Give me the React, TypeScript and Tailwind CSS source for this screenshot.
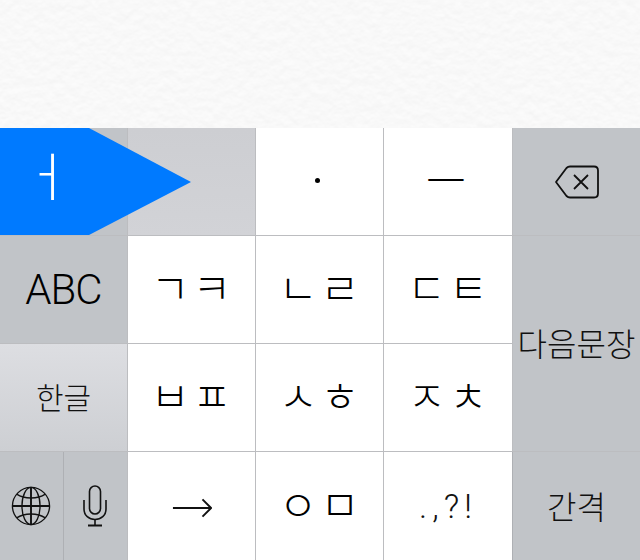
const cjk = "font-['Noto_Sans_CJK_KR','Noto_Sans',sans-serif]";

function Jamo({ a, b }: { a: string; b: string }) {
  return (
    <div className={`flex gap-[3px] pb-[7px] pr-[1px] text-[42px] leading-none font-light text-black ${cjk}`}>
      <span>{a}</span>
      <span>{b}</span>
    </div>
  );
}

function Key({ children, className = "" }: { children?: React.ReactNode; className?: string }) {
  return (
    <div className={`flex items-center justify-center border-b border-[#bcbdc0] ${className}`}>
      {children}
    </div>
  );
}

function PaperTexture() {
  return (
    <svg className="block" width="640" height="128">
      <filter id="paper" x="0" y="0" width="100%" height="100%">
        <feTurbulence type="fractalNoise" baseFrequency="0.11" numOctaves="3" seed="4" />
        <feDiffuseLighting surfaceScale="0.35" diffuseConstant="1.07" lightingColor="#f8f8f8">
          <feDistantLight azimuth="90" elevation="70" />
        </feDiffuseLighting>
      </filter>
      <rect width="640" height="128" fill="#f7f7f7" />
      <rect width="640" height="128" filter="url(#paper)" />
    </svg>
  );
}

function GlobeIcon() {
  return (
    <svg width="40" height="40" viewBox="0 0 42 42" fill="none" stroke="#111" strokeWidth="1.4">
      <circle cx="21" cy="21" r="19.5" />
      <ellipse cx="21" cy="21" rx="9.5" ry="19.5" />
      <path d="M21 1.5v39M1.5 21h39" strokeWidth="2" />
      <path d="M6 8.5c8 5.5 22 5.5 30 0M6 33.5c8-5.5 22-5.5 30 0" />
    </svg>
  );
}

function MicIcon() {
  return (
    <svg width="24" height="42" viewBox="0 0 24 42" fill="none" stroke="#111" strokeWidth="1.6">
      <rect x="6.500" y="1" width="11" height="28" rx="5.500" />
      <path d="M1 15v9c0 6.500 5 10.500 11 10.500s11-4 11-10.500v-9" />
      <path d="M12 34.500V40" />
      <path d="M5 40.500h14" strokeWidth="2" />
    </svg>
  );
}

function BackspaceIcon() {
  return (
    <svg width="46" height="34" viewBox="0 0 46 34" fill="none" stroke="#111" strokeWidth="1.800" strokeLinejoin="round">
      <path d="M16 1.500h24c2.500 0 4 1.500 4 4v23c0 2.500-1.500 4-4 4H16c-1.500 0-2.500-.5-3.500-1.500L2 17 12.500 3c1-1 2-1.500 3.500-1.500z" />
      <path d="M20 10l14 14M34 10L20 24" />
    </svg>
  );
}

function ArrowIcon() {
  return (
    <svg className="mt-[3px]" width="40" height="24" viewBox="0 0 42 24" fill="none" stroke="#111" strokeWidth="2">
      <path d="M1 12h39M32 3l9 9-9 9" />
    </svg>
  );
}

export default function App() {
  return (
    <div className="relative w-[640px] h-[560px] overflow-hidden bg-[#f7f7f7]">
      <PaperTexture />
      <div className="grid grid-cols-[128px_128px_128px_128px_128px] grid-rows-[108px_108px_108px_108px] h-[432px]">
        <Key className="bg-[#c1c4c8] border-r" />
        <Key className="bg-gradient-to-b from-[#cdced2] to-[#d2d3d7] border-r" />
        <Key className="bg-white border-r">
          <span className="w-[5px] h-[5px] mr-[4px] mb-[3px] rounded-full bg-black" />
        </Key>
        <Key className="bg-white">
          <span className={`pb-[7px] pr-[4px] text-[44px] leading-none font-light text-black ${cjk}`}>ㅡ</span>
        </Key>
        <Key className="bg-[#c1c4c8] border-l">
          <BackspaceIcon />
        </Key>

        <Key className="bg-[#c1c4c8] border-r">
          <span className="pt-[1px] text-[42px] leading-none tracking-[-1px] font-light text-black font-['Roboto',sans-serif]">ABC</span>
        </Key>
        <Key className="bg-white border-r"><Jamo a="ㄱ" b="ㅋ" /></Key>
        <Key className="bg-white border-r"><Jamo a="ㄴ" b="ㄹ" /></Key>
        <Key className="bg-white"><Jamo a="ㄷ" b="ㅌ" /></Key>
        <Key className="row-span-2 bg-[#c1c4c8] border-l">
          <span className={`pb-[3px] text-[32px] leading-none whitespace-nowrap font-light text-[#111] ${cjk}`}>다음문장</span>
        </Key>

        <Key className="bg-gradient-to-b from-[#dddee2] to-[#cdcfd3] border-r">
          <span className={`pb-[3px] text-[30px] leading-none font-light text-[#111] ${cjk}`}>한글</span>
        </Key>
        <Key className="bg-white border-r"><Jamo a="ㅂ" b="ㅍ" /></Key>
        <Key className="bg-white border-r"><Jamo a="ㅅ" b="ㅎ" /></Key>
        <Key className="bg-white"><Jamo a="ㅈ" b="ㅊ" /></Key>

        <div className="grid grid-cols-2 border-r border-[#bcbdc0] bg-[#c1c4c8]">
          <div className="flex items-center justify-center border-r border-[#aeb0b4]"><GlobeIcon /></div>
          <div className="flex items-center justify-center"><MicIcon /></div>
        </div>
        <div className="flex items-center justify-center border-r border-[#bcbdc0] bg-white"><ArrowIcon /></div>
        <div className="flex items-center justify-center border-r border-[#bcbdc0] bg-white">
          <Jamo a="ㅇ" b="ㅁ" />
        </div>
        <div className="flex items-center justify-center bg-white">
          <span className="text-[34px] leading-none tracking-[5px] font-light text-[#111] font-['Roboto',sans-serif]">.,?!</span>
        </div>
        <div className="flex items-center justify-center bg-[#c1c4c8] border-l border-[#aeb0b4]">
          <span className={`pb-[3px] text-[32px] leading-none font-light text-[#111] ${cjk}`}>간격</span>
        </div>
      </div>

      {/* key popup dragged over the top row */}
      <svg className="absolute left-0 top-[128px]" width="192" height="108" viewBox="0 0 192 108">
        <path d="M0 0H89L191 54 89 107H0z" fill="#007aff" />
      </svg>
      <span className={`absolute left-[24px] top-[148px] text-[52px] leading-none font-light text-white ${cjk}`}>ㅓ</span>
    </div>
  );
}
